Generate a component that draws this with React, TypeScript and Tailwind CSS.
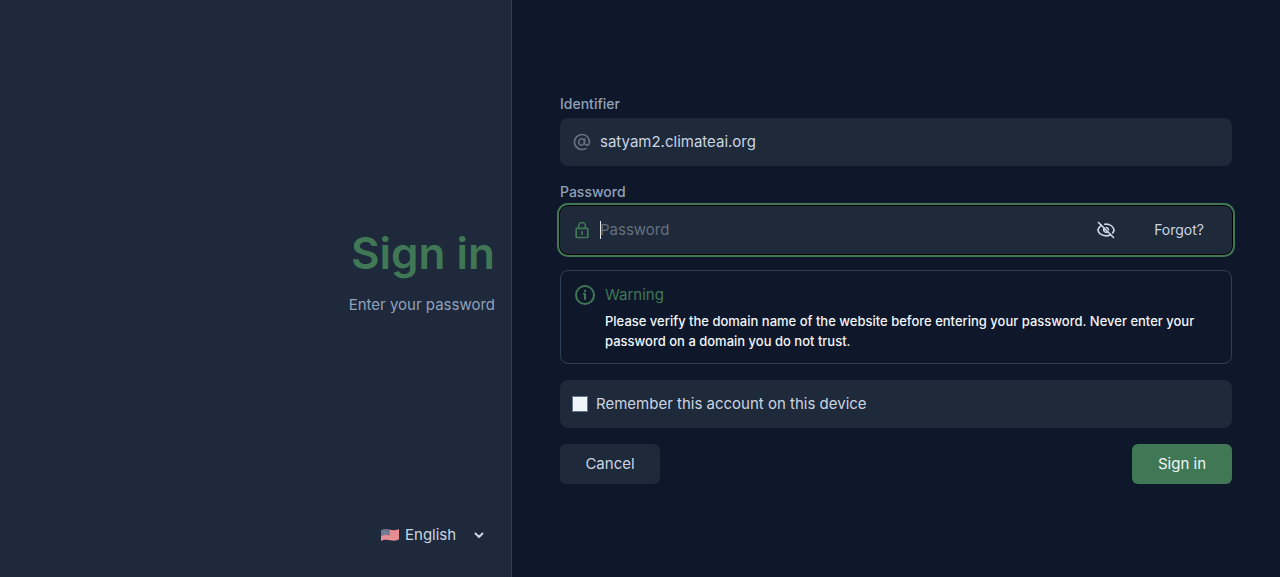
import { useState } from 'react';
import type { FormEvent, ReactNode } from 'react';

function AtIcon() {
  return (
    <svg viewBox="0 0 24 24" fill="currentColor" className="size-5 shrink-0" aria-hidden="true">
      <path
        fillRule="evenodd"
        clipRule="evenodd"
        d="M12 4a8 8 0 1 0 4.21 14.804 1 1 0 0 1 1.054 1.7A9.958 9.958 0 0 1 12 22C6.477 22 2 17.523 2 12S6.477 2 12 2s10 4.477 10 10c0 1.104-.27 2.31-.949 3.243-.716.984-1.849 1.6-3.331 1.465a4.207 4.207 0 0 1-2.93-1.585c-.94 1.21-2.388 1.94-3.985 1.715-2.53-.356-4.04-2.91-3.682-5.458.358-2.547 2.514-4.586 5.044-4.23.905.127 1.68.536 2.286 1.126a1 1 0 0 1 1.964.368l-.515 3.545v.002a2.222 2.222 0 0 0 1.999 2.526c.75.068 1.212-.21 1.533-.65.358-.493.566-1.245.566-2.067a8 8 0 0 0-8-8Zm-.112 5.13c-1.195-.168-2.544.819-2.784 2.529-.24 1.71.784 3.03 1.98 3.198 1.195.168 2.543-.819 2.784-2.529.24-1.71-.784-3.03-1.98-3.198Z"
      />
    </svg>
  );
}

function LockIcon() {
  return (
    <svg viewBox="0 0 24 24" fill="currentColor" className="size-5 shrink-0" aria-hidden="true">
      <path
        fillRule="evenodd"
        clipRule="evenodd"
        d="M7 7a5 5 0 0 1 10 0v2h1a2 2 0 0 1 2 2v9a2 2 0 0 1-2 2H6a2 2 0 0 1-2-2v-9a2 2 0 0 1 2-2h1V7Zm-1 4v9h12v-9H6Zm9-2H9V7a3 3 0 1 1 6 0v2Zm-3 4a1 1 0 0 1 1 1v3a1 1 0 1 1-2 0v-3a1 1 0 0 1 1-1Z"
      />
    </svg>
  );
}

function EyeSlashIcon() {
  return (
    <svg
      viewBox="0 0 24 24"
      fill="none"
      stroke="currentColor"
      strokeWidth="2"
      strokeLinecap="round"
      className="size-5"
      aria-hidden="true"
    >
      <path d="M3 3l18 18" />
      <path d="M6.300 6.400C4.200 7.800 2.700 9.800 2.300 12c.8 4 4.800 7 9.700 7 2 0 3.800-.5 5.300-1.400" />
      <path d="M10.500 5.100C11 5.050 11.500 5 12 5c4.900 0 8.900 3 9.700 7-.2 1.300-.8 2.500-1.700 3.500" />
      <path d="M9.900 9.900a3 3 0 0 0 4.200 4.200" />
      <path d="M12.500 9.040a3 3 0 0 1 2.460 2.460" />
    </svg>
  );
}

function InfoIcon() {
  return (
    <svg
      viewBox="0 0 24 24"
      fill="none"
      stroke="currentColor"
      strokeWidth="2"
      strokeLinecap="round"
      strokeLinejoin="round"
      className="size-6 shrink-0"
      aria-hidden="true"
    >
      <circle cx="12" cy="12" r="9" />
      <path d="M11 11h1v5" />
      <circle cx="12" cy="8" r="1.200" fill="currentColor" stroke="none" />
    </svg>
  );
}

function ChevronIcon() {
  return (
    <svg
      viewBox="0 0 12 12"
      fill="none"
      stroke="currentColor"
      strokeWidth="2"
      strokeLinecap="round"
      strokeLinejoin="round"
      className="pointer-events-none size-3"
      aria-hidden="true"
    >
      <path d="M2.500 4.500l3.500 3.500 3.500-3.500" />
    </svg>
  );
}

function FlagIcon() {
  return (
    <svg viewBox="0 0 18 14" className="h-[14px] w-[18px]" aria-hidden="true">
      <path d="M0 2.500C3 .8 6 1 9 1.800s6 .5 9-.8v10.500c-3 1.300-6 1.500-9 .8s-6-1-9 .7Z" fill="#e6858c" />
      <path
        d="M9 3.800c3 .7 6 .5 9-.8M9 6.300c3 .7 6 .5 9-.8M0 9.500c3-1.700 6-1.400 9-.7s6 .5 9-.8M0 11.500c3-1.700 6-1.400 9-.7s6 .5 9-.8"
        fill="none"
        stroke="#e3a6ac"
        strokeWidth="0.500"
      />
      <path d="M0 2.500C3 .8 6 1 8.500 1.700v5.600C6 6.600 3 6.500 0 8Z" fill="#64748b" />
      <path d="M1.500 4h5.500M1.500 5.800h5.500" stroke="#a3adbb" strokeWidth="0.700" strokeDasharray="0.800 1" />
    </svg>
  );
}

function Field({ id, label, children }: { id: string; label: string; children: ReactNode }) {
  return (
    <div className="flex flex-col gap-1">
      <label htmlFor={id} className="text-sm font-medium text-slate-400">
        {label}
      </label>
      {children}
    </div>
  );
}

export default function App() {
  const [identifier, setIdentifier] = useState('satyam2.climateai.org');
  const [password, setPassword] = useState('');
  const [visible, setVisible] = useState(false);
  const [remember, setRemember] = useState(false);

  const handleSubmit = (e: FormEvent) => {
    e.preventDefault();
  };

  return (
    <div className="flex min-h-screen bg-[#0f172a] font-[Inter,sans-serif] text-[15px] leading-6 text-slate-300">
      <aside className="grid w-2/5 grid-rows-[1fr_auto_1fr] justify-items-end border-r border-slate-700 bg-[#1e293b] px-4 pb-8">
        <div className="row-start-2 text-right">
          <h1 className="text-[44px] leading-12 font-semibold text-[#407855]">Sign in</h1>
          <p className="mt-4 text-slate-400">Enter your password</p>
        </div>

        <div className="row-start-3 flex h-5 items-center gap-1.5 self-end pr-2.5">
          <FlagIcon />
          <select aria-label="Language" className="appearance-none bg-transparent pr-2.5 outline-none">
            <option>English</option>
          </select>
          <ChevronIcon />
        </div>
      </aside>

      <main className="flex flex-1 items-center px-12">
        <form onSubmit={handleSubmit} className="flex w-full flex-col gap-4">
          <Field id="identifier" label="Identifier">
            <div className="flex h-12 items-center gap-2 rounded-lg bg-[#1e293a] px-3">
              <span className="text-[#64707f]">
                <AtIcon />
              </span>
              <input
                id="identifier"
                type="text"
                value={identifier}
                onChange={(e) => setIdentifier(e.target.value)}
                className="min-w-0 flex-1 bg-transparent outline-none"
              />
            </div>
          </Field>

          <Field id="password" label="Password">
            <div className="flex h-12 items-center gap-2 rounded-lg bg-[#1e293a] px-3 ring-2 ring-[#407855] ring-offset-1 ring-offset-black">
              <span className="text-[#407855]">
                <LockIcon />
              </span>
              <div className="flex min-w-0 flex-1 items-center">
                {/* caret */}
                {password === '' && <span className="-mr-px h-[18px] w-px bg-slate-200" />}
                <input
                  id="password"
                  type={visible ? 'text' : 'password'}
                  placeholder="Password"
                  value={password}
                  onChange={(e) => setPassword(e.target.value)}
                  className="min-w-0 flex-1 bg-transparent outline-none placeholder:text-[#64707f]"
                />
              </div>
              <button
                type="button"
                aria-label="Show password"
                onClick={() => setVisible(!visible)}
                className="px-2"
              >
                <EyeSlashIcon />
              </button>
              <button type="button" className="ml-1.5 px-4 text-sm">
                Forgot?
              </button>
            </div>
          </Field>

          <div className="flex gap-2 rounded-lg border border-slate-700 p-3 text-[#407855]">
            <InfoIcon />
            <div className="flex flex-col gap-1">
              <h3>Warning</h3>
              <p className="text-[13px] leading-5 font-medium text-slate-100">
                Please verify the domain name of the website before entering your password. Never enter your
                password on a domain you do not trust.
              </p>
            </div>
          </div>

          <label className="flex h-12 items-center gap-2 rounded-lg bg-[#1e293a] px-3">
            <input
              type="checkbox"
              checked={remember}
              onChange={(e) => setRemember(e.target.checked)}
              className="size-4 appearance-none border border-slate-500 bg-slate-100 checked:bg-[#407855]"
            />
            Remember this account on this device
          </label>

          <div className="flex justify-between">
            <button type="button" className="h-10 min-w-25 rounded-md bg-[#1e293a] px-5">
              Cancel
            </button>
            <button type="submit" className="h-10 min-w-25 rounded-md bg-[#407855] px-5 text-slate-100">
              Sign in
            </button>
          </div>
        </form>
      </main>
    </div>
  );
}
